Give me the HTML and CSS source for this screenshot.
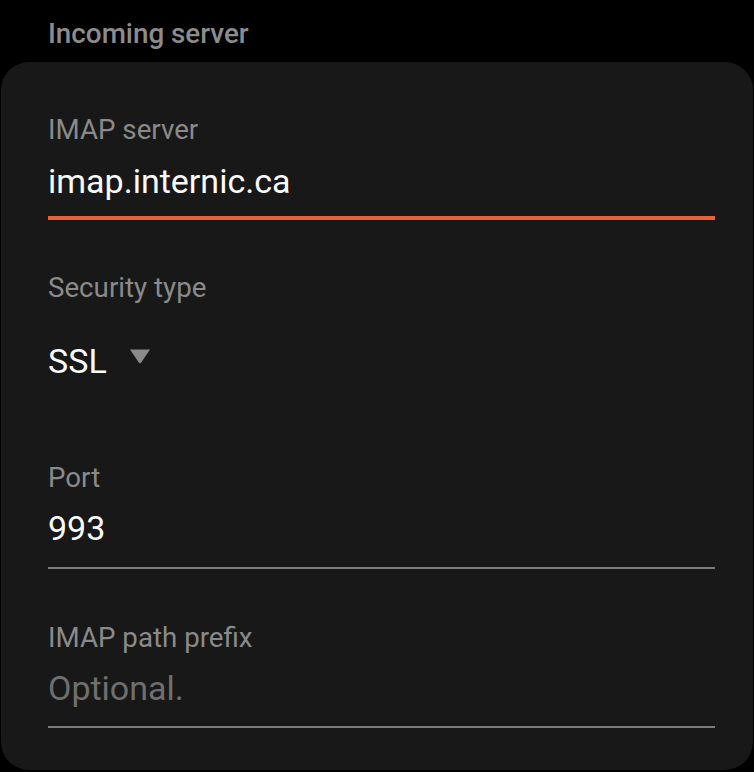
FILE: index.html
```html
<!DOCTYPE html>
<html>
<head>
<meta charset="utf-8">
<link rel="stylesheet" href="styles.css">
</head>
<body>
<div class="section-title">Incoming server</div>
<div class="card">
  <div class="field field-first field-focused">
    <div class="label">IMAP server</div>
    <div class="value">imap.internic.ca</div>
  </div>
  <div class="field field-select">
    <div class="label">Security type</div>
    <div class="select">
      <span class="value">SSL</span>
      <svg class="caret" width="22" height="16" viewBox="0 0 22 16"><path d="M1 1.5 L21 1.5 L12.2 14.6 Q11 16.2 9.8 14.6 Z" fill="#8a8a8a"/></svg>
    </div>
  </div>
  <div class="field field-port">
    <div class="label">Port</div>
    <div class="value">993</div>
  </div>
  <div class="field field-prefix">
    <div class="label">IMAP path prefix</div>
    <div class="value placeholder">Optional.</div>
  </div>
</div>
</body>
</html>
```
FILE: styles.css
```css
html, body {
  margin: 0;
  padding: 0;
  background: #000;
}
body {
  width: 754px;
  height: 772px;
  overflow: hidden;
  font-family: Roboto, "Noto Sans", sans-serif;
}
.section-title {
  padding: 14px 0 0 48px;
  height: 48px;
  box-sizing: border-box;
  height: 62px;
  font-size: 27.8px;
  line-height: 40px;
  font-weight: 500;
  color: #8c8c8c;
}
.card {
  margin: 0 1px;
  height: 708px;
  box-sizing: border-box;
  background: #181818;
  border-radius: 28px;
  padding: 50px 38px 0 47px;
}
.label {
  font-size: 27.7px;
  line-height: 36px;
  color: #8a8a8a;
}
.value {
  font-size: 34px;
  line-height: 44px;
  color: #fafafa;
}
.field-first .value {
  margin-top: 11px;
  padding-bottom: 13px;
  border-bottom: 4px solid #e4633d;
}
.field-select {
  margin-top: 50px;
}
.select {
  margin-top: 33px;
  display: flex;
  align-items: center;
  gap: 22px;
}
.caret {
  display: block;
  margin-top: -10px;
}
.field-port {
  margin-top: 77px;
}
.field-port .value {
  margin-top: 10px;
  padding-bottom: 17px;
  border-bottom: 2px solid #7c7c7c;
}
.field-prefix {
  margin-top: 51px;
}
.field-prefix .value {
  margin-top: 10px;
  padding-bottom: 16px;
  border-bottom: 2px solid #7c7c7c;
}
.placeholder {
  color: #6f6f6f;
}
```
